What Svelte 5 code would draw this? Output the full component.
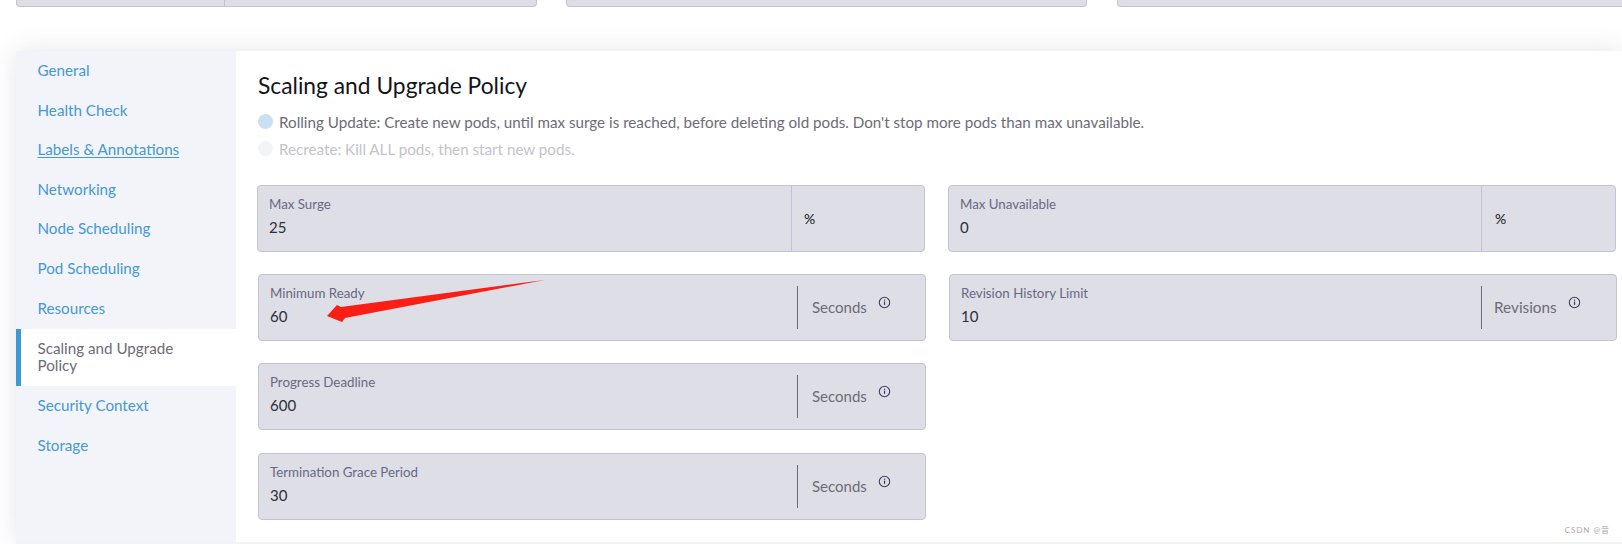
<script>
  const nav = [
    { label: 'General' },
    { label: 'Health Check' },
    { label: 'Labels & Annotations', underline: true },
    { label: 'Networking' },
    { label: 'Node Scheduling' },
    { label: 'Pod Scheduling' },
    { label: 'Resources' },
    { label: 'Scaling and Upgrade Policy', active: true },
    { label: 'Security Context' },
    { label: 'Storage' }
  ];
</script>

{#snippet field(label, value, unit, info, extra)}
  <div class="field {extra}">
    <div class="main">
      <span class="label">{label}</span>
      <span class="value">{value}</span>
    </div>
    {#if info}
      <div class="addon info">
        <span class="unit">{unit}</span>
        <svg class="icon" viewBox="0 0 14 14" width="13" height="13" aria-hidden="true">
          <circle cx="7" cy="7" r="5.6" fill="none" stroke="#3d3d5c" stroke-width="1.2" />
          <rect x="6.4" y="6" width="1.3" height="3.6" fill="#3d3d5c" />
          <rect x="6.4" y="3.9" width="1.3" height="1.3" fill="#3d3d5c" />
        </svg>
      </div>
    {:else}
      <div class="addon plain"><span>{unit}</span></div>
    {/if}
  </div>
{/snippet}

<div class="page">
  <div class="strip">
    <div class="stub split"><i></i></div>
    <div class="stub"></div>
    <div class="stub last"></div>
  </div>

  <div class="card">
    <nav class="side">
      {#each nav as item}
        <a class="item" class:active={item.active} class:under={item.underline} href="#top">{item.label}</a>
      {/each}
    </nav>

    <section class="content">
      <h2>Scaling and Upgrade Policy</h2>
      <div class="radio on"><span class="dot"></span>Rolling Update: Create new pods, until max surge is reached, before deleting old pods. Don't stop more pods than max unavailable.</div>
      <div class="radio off"><span class="dot"></span>Recreate: Kill ALL pods, then start new pods.</div>

      <div class="grid">
        {@render field('Max Surge', '25', '%', false, '')}
        {@render field('Max Unavailable', '0', '%', false, 'right')}
        {@render field('Minimum Ready', '60', 'Seconds', true, 'shift')}
        {@render field('Revision History Limit', '10', 'Revisions', true, 'shift right')}
        {@render field('Progress Deadline', '600', 'Seconds', true, 'shift')}
        <div></div>
        {@render field('Termination Grace Period', '30', 'Seconds', true, 'shift final')}
      </div>

      <svg class="arrow" viewBox="0 0 222 46" width="222" height="46" aria-hidden="true">
        <polygon points="219.5,2 16,29 12,27 2,38 17,44 20,40" fill="#fa1e14" />
      </svg>

      <span class="mark">CSDN @音</span>
    </section>
  </div>
</div>

<style>
  :global(body) {
    margin: 0;
    background: #fff;
    font-family: Lato, "Noto Sans CJK SC", sans-serif;
  }
  .page {
    width: 1622px;
    height: 544px;
    overflow: hidden;
    box-sizing: border-box;
  }
  .strip {
    display: flex;
    height: 7px;
    padding-left: 16px;
    box-sizing: border-box;
  }
  .stub {
    width: 521px;
    margin-right: 30px;
    background: #dddee6;
    border: 1px solid #c3c3d4;
    border-top: 0;
    border-radius: 0 0 4px 4px;
    box-sizing: border-box;
    position: relative;
  }
  .stub.split {
    margin-right: 29px;
  }
  .stub.split i {
    position: absolute;
    left: 207px;
    top: 0;
    bottom: 0;
    width: 1px;
    background: #c3c3d4;
  }
  .stub.last {
    margin-right: -40px;
  }
  .card {
    display: flex;
    height: 493px;
    margin: 44px 0 0 16px;
    background: #fff;
    box-shadow: 0 0 24px rgba(60, 60, 110, 0.13);
    border-bottom: 2px solid #f2f3f9;
    box-sizing: border-box;
  }
  .side {
    width: 220px;
    flex: none;
    padding-top: 1px;
    background: #f3f4f9;
    display: flex;
    flex-direction: column;
  }
  .item {
    display: block;
    min-height: 39.6px;
    padding: 9px 30px 0 21.5px;
    box-sizing: border-box;
    font-size: 15.2px;
    line-height: 18px;
    color: #4499d4;
    text-decoration: none;
  }
  .item.under {
    text-decoration: underline;
    text-underline-offset: 2px;
  }
  .item.active {
    min-height: 57px;
    margin-bottom: 1px;
    padding: 11px 30px 0 16.5px;
    border-left: 5px solid #3d98d3;
    background: #fff;
    line-height: 17px;
    color: #6c6c76;
  }
  .content {
    position: relative;
    flex: 1;
    padding: 0 0 0 21px;
    min-width: 0;
  }
  h2 {
    margin: 21px 0 9px 1px;
    font-size: 22.8px;
    line-height: 27px;
    font-weight: 400;
    color: #141419;
  }
  .radio {
    display: flex;
    align-items: center;
    height: 27px;
    margin-left: 1px;
    font-size: 15.2px;
    color: #6c6c76;
    white-space: nowrap;
  }
  .radio.off {
    color: #c3c3ca;
  }
  .dot {
    width: 15px;
    height: 15px;
    margin-right: 6px;
    border-radius: 50%;
    background: #c8e0f1;
    flex: none;
  }
  .off .dot {
    background: #f3f4f8;
  }
  .grid {
    display: grid;
    grid-template-columns: 668px 668px;
    column-gap: 23px;
    row-gap: 22px;
    margin-top: 23px;
  }
  .field {
    display: flex;
    height: 67px;
    background: #dddee6;
    border: 1px solid #c3c3d6;
    border-radius: 4px;
    box-sizing: border-box;
  }
  .field.shift {
    margin: 0 -1px 0 1px;
  }
  .field.final {
    margin-top: 1px;
  }
  .main {
    flex: 1;
    padding: 10px 11px 0;
    display: flex;
    flex-direction: column;
    min-width: 0;
  }
  .label {
    font-size: 13.3px;
    line-height: 16px;
    color: #696985;
  }
  .value {
    margin-top: 5px;
    font-size: 15px;
    line-height: 20px;
    color: #2f2f38;
  }
  .addon {
    flex: none;
    width: 133px;
    box-sizing: border-box;
    display: flex;
  }
  .addon.plain {
    align-items: center;
    padding-left: 12px;
    border-left: 1px solid #c3c3d6;
    font-size: 14px;
    color: #141419;
  }
  .addon.info {
    width: 128px;
    margin: 11px 0 11px;
    padding: 12px 0 0 14px;
    border-left: 1px solid #6c6c76;
    font-size: 15px;
    color: #6c6c76;
    align-items: flex-start;
  }
  .right .addon.plain {
    width: 134px;
    padding-left: 13px;
  }
  .shift.right .addon.info {
    width: 135px;
    padding-left: 12px;
    font-size: 15.3px;
  }
  .icon {
    margin: -2px 0 0 11px;
  }
  .arrow {
    position: absolute;
    left: 89px;
    top: 227px;
  }
  .mark {
    position: absolute;
    right: 12px;
    bottom: 7px;
    font-size: 8px;
    letter-spacing: 0.95px;
    color: #a8a8a8;
  }
</style>
